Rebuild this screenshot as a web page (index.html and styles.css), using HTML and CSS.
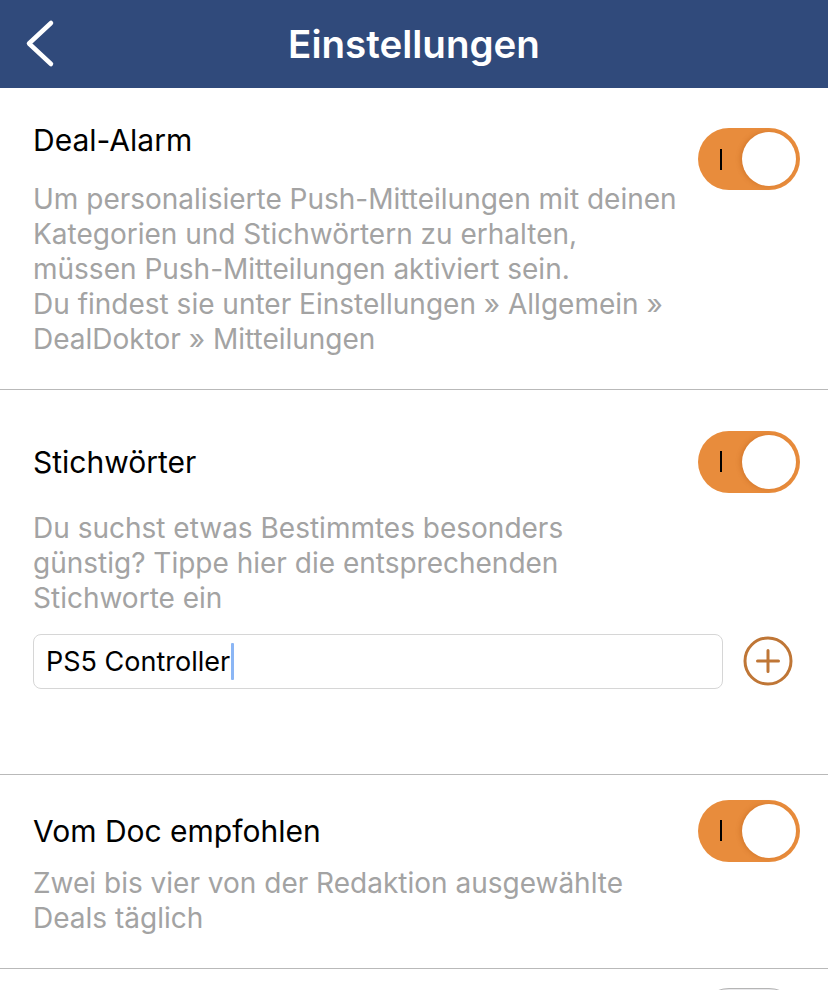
FILE: index.html
```html
<!DOCTYPE html>
<html lang="de">
<head>
    <meta charset="UTF-8">
    <meta name="viewport" content="width=device-width, initial-scale=1.0">
    <title>Einstellungen</title>
    <link rel="stylesheet" href="styles.css">
</head>
<body>

    <header class="topbar">
        <button class="back" type="button" aria-label="Zurück">
            <svg width="32" height="52" viewBox="0 0 32 52">
                <path d="M27 5 L5 25.5 L27 46" fill="none" stroke="#fff" stroke-width="4.5" stroke-linecap="round" stroke-linejoin="round"/>
            </svg>
        </button>
        <h1>Einstellungen</h1>
    </header>

    <main class="settings">
        <!-- Deal-Alarm -->
        <section class="setting setting--stacked">
            <h2 class="setting-title">Deal-Alarm</h2>
            <div class="toggle is-on"><span class="toggle-mark"></span><span class="toggle-knob"></span></div>
            <p class="setting-desc">
                Um personalisierte Push-Mitteilungen mit deinen<br>
                Kategorien und Stichwörtern zu erhalten,<br>
                müssen Push-Mitteilungen aktiviert sein.<br>
                Du findest sie unter Einstellungen » Allgemein »<br>
                DealDoktor » Mitteilungen
            </p>
        </section>

        <!-- Stichwörter -->
        <section class="setting setting--keywords">
            <h2 class="setting-title">Stichwörter</h2>
            <div class="toggle is-on"><span class="toggle-mark"></span><span class="toggle-knob"></span></div>
            <p class="setting-desc">
                Du suchst etwas Bestimmtes besonders<br>
                günstig? Tippe hier die entsprechenden<br>
                Stichworte ein
            </p>
            <div class="keyword-row">
                <div class="keyword-field">PS5 Controller<span class="caret"></span></div>
                <button class="add-btn" type="button" aria-label="Hinzufügen">
                    <svg width="50" height="50" viewBox="0 0 50 50">
                        <circle cx="25" cy="25" r="23" fill="none" stroke="#bf7636" stroke-width="3"/>
                        <path d="M25 14.5 V35.5 M14.5 25 H35.5" stroke="#bf7636" stroke-width="3" stroke-linecap="round"/>
                    </svg>
                </button>
            </div>
        </section>

        <!-- Vom Doc empfohlen -->
        <section class="setting setting--doc">
            <h2 class="setting-title">Vom Doc empfohlen</h2>
            <div class="toggle is-on"><span class="toggle-mark"></span><span class="toggle-knob"></span></div>
            <p class="setting-desc">
                Zwei bis vier von der Redaktion ausgewählte<br>
                Deals täglich
            </p>
        </section>

        <section class="setting setting--next">
            <h2 class="setting-title"></h2>
            <div class="toggle"><span class="toggle-knob"></span></div>
        </section>
    </main>

</body>
</html>
```

FILE: styles.css
```css
/* Grundlayout */
body {
    margin: 0;
    font-family: Inter, "Noto Sans", sans-serif;
    background-color: #fff;
    color: #000;
}

.topbar {
    height: 88px;
    background-color: #304a7b;
    display: grid;
    grid-template-columns: 88px 1fr 88px;
    align-items: center;
}

.back {
    background: none;
    border: 0;
    padding: 0 0 0 24px;
    height: 52px;
    display: flex;
    cursor: pointer;
}

.topbar h1 {
    margin: 0;
    text-align: center;
    color: #fff;
    font-size: 38.5px;
    font-weight: 600;
}

/* Einstellungsblöcke */
.setting {
    display: grid;
    grid-template-columns: 1fr auto;
    align-items: center;
    padding: 0 28px 0 33px;
    border-bottom: 1px solid #b9b9b9;
}

.setting-title {
    margin: 0;
    font-size: 30px;
    font-weight: 400;
    line-height: 34px;
}

.setting-desc {
    grid-column: 1;
    margin: 0;
    font-size: 28px;
    line-height: 35px;
    color: #a3a3a3;
    white-space: nowrap;
}

.setting--stacked {
    align-items: start;
    padding-top: 35px;
    padding-bottom: 32px;
}

.setting--stacked .toggle {
    grid-row: 1 / span 2;
    grid-column: 2;
    margin-top: 5px;
}

.setting--stacked .setting-desc {
    margin-top: 24.5px;
}

.setting--keywords {
    padding-top: 41px;
    padding-bottom: 85px;
}

.setting--keywords .setting-desc {
    margin-top: 18.5px;
}

.setting--doc {
    padding-top: 25px;
    padding-bottom: 31.5px;
}

.setting--doc .setting-desc {
    margin-top: 4.5px;
}

.setting--next {
    padding-top: 19px;
    border-bottom: 0;
}

/* Schalter */
.toggle {
    width: 102px;
    height: 62px;
    box-sizing: border-box;
    border-radius: 31px;
    background-color: #e9e9eb;
    border: 1px solid #b5b5b5;
    display: flex;
    align-items: center;
    padding: 0 4px;
}

.toggle.is-on {
    background-color: #e88c3c;
    border: 0;
    justify-content: space-between;
    padding: 0 4px 0 22px;
}

.toggle-mark {
    width: 2px;
    height: 21px;
    background-color: #000;
}

.toggle-knob {
    width: 54px;
    height: 54px;
    border-radius: 50%;
    background-color: #fff;
    box-shadow: 0 1px 3px rgba(0, 0, 0, 0.25);
}

.toggle.is-on .toggle-knob {
    box-shadow: -2px 0 4px rgba(180, 90, 20, 0.35);
}

/* Stichwort-Eingabe */
.keyword-row {
    grid-column: 1 / span 2;
    display: flex;
    align-items: center;
    gap: 20px;
    margin-top: 17.5px;
}

.keyword-field {
    flex: 1;
    height: 55px;
    box-sizing: border-box;
    border: 1px solid #d6d6d6;
    border-radius: 8px;
    padding-left: 12px;
    display: flex;
    align-items: center;
    font-size: 27px;
}

.caret {
    width: 3px;
    height: 37px;
    margin-left: 1px;
    background-color: #8bb6f5;
    border-radius: 1px;
}

.add-btn {
    background: none;
    border: 0;
    padding: 0;
    width: 50px;
    height: 50px;
    margin-right: 7px;
    display: flex;
    cursor: pointer;
}
```
